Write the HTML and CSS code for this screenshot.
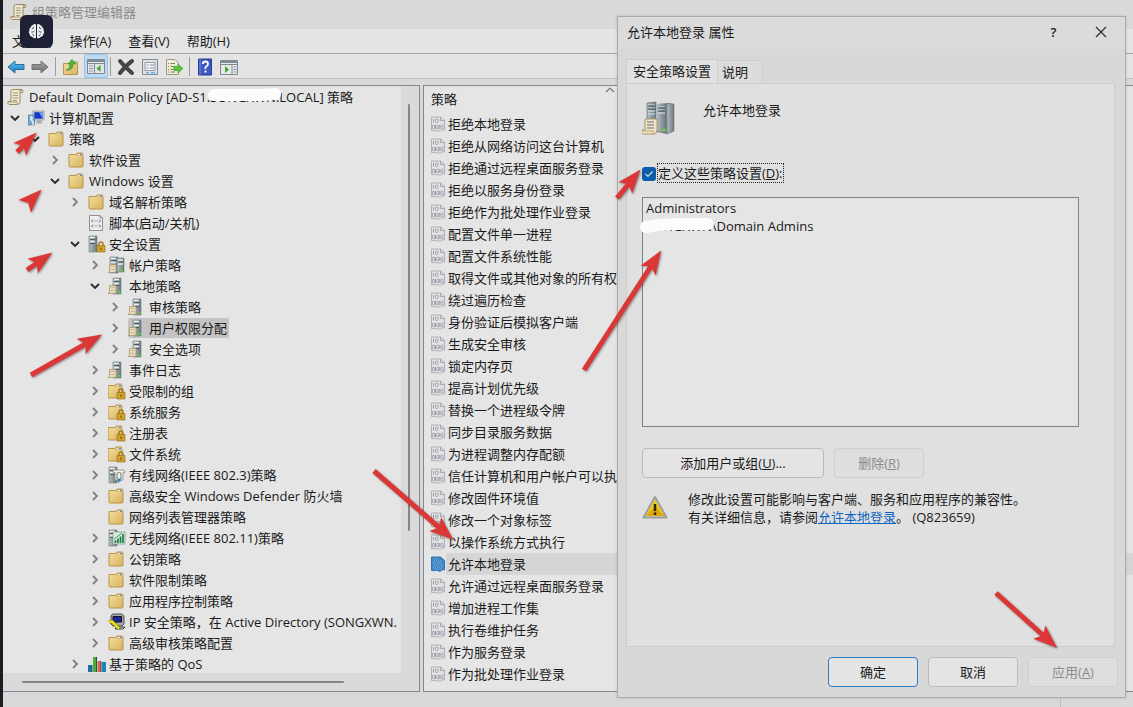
FILE: index.html
```html
<!DOCTYPE html>
<html lang="zh-CN">
<head>
<meta charset="utf-8">
<title>组策略管理编辑器</title>
<link rel="stylesheet" href="styles.css">
</head>
<body>
<svg class="sprite" aria-hidden="true">
  <defs>
    <linearGradient id="gold" x1="0" y1="0" x2="1" y2="1"><stop offset="0" stop-color="#f3dfa0"/><stop offset="1" stop-color="#d8b35c"/></linearGradient>
    <linearGradient id="steel" x1="0" y1="0" x2="1" y2="0"><stop offset="0" stop-color="#b4bfc4"/><stop offset="1" stop-color="#6c787d"/></linearGradient>
    <linearGradient id="sky" x1="0" y1="0" x2="0" y2="1"><stop offset="0" stop-color="#6cc4f0"/><stop offset="1" stop-color="#1678b8"/></linearGradient>
    <linearGradient id="ash" x1="0" y1="0" x2="0" y2="1"><stop offset="0" stop-color="#a8a8a8"/><stop offset="1" stop-color="#6c6c6c"/></linearGradient>
    <marker id="head" markerUnits="userSpaceOnUse" markerWidth="30" markerHeight="20" refX="10" refY="10" orient="auto"><path d="M25 10L1 1l5 9-5 9z" fill="#dc3737"/></marker>
  </defs>
  <symbol id="open" viewBox="0 0 20 20"><path d="M6 8l4 4 4-4" fill="none" stroke="#2c2c2c" stroke-width="1.900"/></symbol>
  <symbol id="shut" viewBox="0 0 20 20"><path d="M8 6l4 4-4 4" fill="none" stroke="#808080" stroke-width="1.800"/></symbol>
  <symbol id="folder" viewBox="0 0 18 18"><path d="M1 3.500V15q0 1 1 1h12q1 0 1-1V3.500L14.500 2H9L8 3.500z" fill="url(#gold)" stroke="#b8944c"/><path d="M9 4.500l1-1.500h5l.5 1.500z" fill="#f4f4ee" stroke="#c2a362" stroke-width=".5"/><path d="M12 3.500h2" stroke="#3a86c8"/></symbol>
  <symbol id="padlock" viewBox="0 0 18 18"><path d="M11 11V9q0-2 2-2t2 2v2" fill="none" stroke="#a47a20" stroke-width="1.500"/><path d="M9 10.500h8V17H9z" fill="#d2a02c" stroke="#91691a" stroke-width=".6"/><path d="M13 12.500v2.500" stroke="#6b4b0b"/></symbol>
  <symbol id="lockfolder" viewBox="0 0 18 18"><use href="#folder" x="-1" width="18" height="18"/><use href="#padlock" width="18" height="18"/></symbol>
  <symbol id="tower" viewBox="0 0 18 18"><path d="M5 1h8v16H5z" fill="url(#steel)" stroke="#6d787d" stroke-width=".6"/><path d="M6 2.500h5M6 6.500h5" stroke="#e8eff2" stroke-width="1.500"/><path d="M6 4.500h5M6 8.500h5" stroke="#46545b" stroke-width=".9"/></symbol>
  <symbol id="scrollet" viewBox="0 0 18 18"><path d="M1.500 8.500H8V15q0 1.500-2 1.500H0q1.500-.5 1.500-2z" fill="#e8dcb8" stroke="#a18e61" stroke-width=".7"/><path d="M3 10.500h3.500M3 13.500h3.500" stroke="#b3a47e" stroke-width=".7"/></symbol>
  <symbol id="seclock" viewBox="0 0 18 18"><use href="#tower" x="-4" width="18" height="18"/><use href="#padlock" width="18" height="18"/></symbol>
  <symbol id="server" viewBox="0 0 18 18"><use href="#tower" width="18" height="18"/><use href="#scrollet" width="18" height="18"/><path d="M10.500 15h2" stroke="#4fdc20" stroke-width="2"/></symbol>
  <symbol id="servers" viewBox="0 0 18 18"><use href="#tower" x="-3" width="18" height="18"/><path d="M9 2h7v14H9z" fill="url(#steel)" stroke="#6d787d" stroke-width=".6"/><path d="M10 4h5M10 8h5" stroke="#e8eff2" stroke-width="1.500"/><path d="M10 6h5" stroke="#46545b"/><use href="#scrollet" width="18" height="18"/><path d="M13 14.500h2" stroke="#4fdc20" stroke-width="2"/></symbol>
  <symbol id="wired" viewBox="0 0 18 18"><use href="#tower" x="-4" width="18" height="18"/><path d="M5 4h10q2 0 2 2.500h-2V14H7V6.500H5z" fill="#f2f0e6" stroke="#8d8a7a" stroke-width=".8"/><path d="M9 13V8q0-1.500 2-1.500T13 8v5" fill="none" stroke="#7b8c98" stroke-width="1.200"/><path d="M10.500 12.500v4M12 12.500v3" stroke="#2e83c6" stroke-width="1.500"/></symbol>
  <symbol id="wireless" viewBox="0 0 18 18"><use href="#tower" x="-4" width="18" height="18"/><path d="M5 3h12v12H5z" fill="#dcebe0" stroke="#84938a" stroke-width=".7"/><path d="M7.500 14v-3M10 14V9.500M12.500 14V7.500M15 14V5" stroke="#168044" stroke-width="1.700"/><path d="M6 10l8-6" stroke="#3c9c65"/></symbol>
  <symbol id="scroll" viewBox="0 0 18 18"><path d="M4 3q0-1.500 1.500-1.500H15q1.500.5.500 3H13v9q0 3-2.500 3H2q-1.500-.5-1-3h3z" fill="#f0e8cf" stroke="#988b69"/><path d="M6 5h5M6 7.500h5M6 10h5M6 12.500h4" stroke="#a59a7c"/><path d="M2 14h8q0 2 1 2" fill="none" stroke="#a39673"/><path d="M13 4.500v-2l2.500 0" fill="none" stroke="#a39673"/></symbol>
  <symbol id="computer" viewBox="0 0 18 18"><path d="M5 2h11v9H5z" fill="#d7dadd" stroke="#888f98" stroke-width=".8"/><path d="M6.300 3.200h8.500v6.500H6.300z" fill="#1736c4"/><path d="M11 3.200h3.800v6.500z" fill="#75a3f5"/><path d="M9 11h4l1.500 3.500H8z" fill="#a8adb1"/><path d="M0 6h5l1.500 3v7H0z" fill="#78a8c9" stroke="#4a7698" stroke-width=".7"/><path d="M2 8q2-1 2 1t-1 1 2 3v3" fill="none" stroke="#d9f1fb" stroke-width="1.500"/></symbol>
  <symbol id="script" viewBox="0 0 18 18"><path d="M1.500 1.500H12L14.500 4v12.500h-13z" fill="#eee" stroke="#909090"/><path d="M12 1.500V4h2.500" fill="none" stroke="#909090"/><path d="M5 5.500L3.500 7 5 8.500M11 5.500L12.500 7 11 8.500M6.500 7h1M8.500 7h1M5 10.500L3.500 12 5 13.500M11 10.500l1.500 1.500-1.500 1.500M6.500 12h1M8.500 12h1" fill="none" stroke="#555" stroke-width=".9"/></symbol>
  <symbol id="ipsec" viewBox="0 0 18 18"><path d="M3 2.500L5 1h9l2 2v8l-2 2H5l-2-2z" fill="#aaa" stroke="#333" stroke-width=".8"/><path d="M5 3.500h8.500v5.500H5z" fill="#1826a0" stroke="#111"/><path d="M7 16h8l2-2H9z" fill="#ccc" stroke="#222" stroke-width=".8"/><path d="M1 9q3-1.500 4.500 1L11 15.500" fill="none" stroke="#7c7500" stroke-width="3.400"/><path d="M1 9q3-1.500 4.500 1L11 15.500" fill="none" stroke="#efe51d" stroke-width="2.400"/></symbol>
  <symbol id="qos" viewBox="0 0 18 18"><path d="M0 10h4v7H0z" fill="#1e6fa8"/><path d="M5 2h4v15H5z" fill="#4cab3a"/><path d="M9.500 6H13v11H9.500z" fill="#d96b42"/><path d="M14 7h4v10h-4z" fill="#2381bc"/><path d="M4 10v7M8.500 2v15M13 6v11" stroke="#174056" stroke-width=".8"/></symbol>
  <symbol id="policy" viewBox="0 0 14 16"><path d="M.5 1h9l4 3.500V14q-1.500-1-3 .5t-3 .5-3-.5-4 0z" fill="#e3e3e6" stroke="#aaaaaf" stroke-width=".9"/><path d="M9.500 1v3.500h4" fill="none" stroke="#a2a2a8" stroke-width=".9"/><path d="M2.500 3v3.500M4.500 9v4M8.800 9v4" stroke="#92929f" stroke-width=".9"/><rect x="4.500" y="3" width="2.500" height="3.500" rx="1" fill="none" stroke="#92929f" stroke-width=".8"/><rect x="1.500" y="9" width="2" height="4" rx="1" fill="none" stroke="#92929f" stroke-width=".7"/><rect x="6" y="9" width="1.800" height="4" rx=".9" fill="none" stroke="#92929f" stroke-width=".7"/><rect x="10" y="9" width="2" height="4" rx="1" fill="none" stroke="#92929f" stroke-width=".7"/></symbol>
</svg>

<div class="window">
  <header class="titlebar"><svg class="ic"><use href="#scroll"/></svg><span>组策略管理编辑器</span></header>
  <nav class="menubar">
    <button>文件(F)</button><button>操作(A)</button><button>查看(V)</button><button>帮助(H)</button>
  </nav>
  <div class="toolbar">
    <button aria-label="后退"><svg class="ic" viewBox="0 0 18 18"><path d="M1 9l7-6v3.500h9v5H8V15z" fill="url(#sky)" stroke="#2272a5"/></svg></button>
    <button aria-label="前进"><svg class="ic" viewBox="0 0 18 18"><path d="M17 9l-7-6v3.500H1v5h9V15z" fill="url(#ash)" stroke="#737373"/></svg></button>
    <span class="sep"></span>
    <button aria-label="上一级"><svg class="ic" viewBox="0 0 18 18"><path d="M1.500 5.500V16.500h14V4h-5L9 5.500z" fill="url(#gold)" stroke="#b8944c"/><path d="M4 12q4 0 4-6H6L10 1.500l4 4.500H11q0 7-7 6z" fill="#4eb53a" stroke="#2f8524" stroke-width=".6"/></svg></button>
    <button class="on" aria-label="显示控制台树"><svg class="ic" viewBox="0 0 18 18"><path d="M.5 2.500h17v14H.5z" fill="#e4e4e4" stroke="#818890"/><path d="M1 4h16" stroke="#7f8b97" stroke-width="2"/><path d="M1 6.500h16M7.500 6.500v10" stroke="#818890"/><path d="M2 9h4M2 11.500h4M2 14h4" stroke="#8ba3b7"/><path d="M13.500 8v7l-4-3.500z" fill="#42a531"/></svg></button>
    <span class="sep"></span>
    <button aria-label="删除"><svg class="ic" viewBox="0 0 18 18"><path d="M3 3q4 5 12 12M15 3Q8 8 3 15" fill="none" stroke="#444" stroke-width="4" stroke-linecap="round"/></svg></button>
    <button aria-label="属性"><svg class="ic" viewBox="0 0 18 18"><path d="M1.500 1.500h15v15h-15z" fill="#dde2e6" stroke="#828a91"/><path d="M4 4.500h10v8H4z" fill="#f4f4f4" stroke="#929da6"/><path d="M5.500 7h2M9 7h4M5.500 10h2M9 10h4" stroke="#728aa0"/><path d="M5 14.700h3M10 14.700h4" stroke="#6cb4df" stroke-width="1.500"/></svg></button>
    <button aria-label="导出列表"><svg class="ic" viewBox="0 0 18 18"><path d="M1.500 1.500H10L13.500 5v11.500h-12z" fill="#f0ebd5" stroke="#a09a7e"/><path d="M3 5.500h1M5.500 5.500H10M3 8.500h1M5.500 8.500H9M3 11.500h1M5.500 11.500H9M3 14h1M5.500 14H10" stroke="#7f846b"/><path d="M9 8.500h4V6l5 4.500-5 4.500v-2.500H9z" fill="#5bc63c" stroke="#339225" stroke-width=".6"/></svg></button>
    <span class="sep"></span>
    <button aria-label="帮助"><svg class="ic" viewBox="0 0 18 18"><path d="M2.500 1h13v16h-13z" fill="#3b58c1" stroke="#253b91"/><path d="M4 1v16" stroke="#7490df"/><path d="M6.800 6q.2-2.500 2.700-2.500T12 6q0 1.500-1.500 2.300T9.400 11" fill="none" stroke="#fff" stroke-width="1.800"/><path d="M8.500 12.500h2v2h-2z" fill="#fff"/></svg></button>
    <button aria-label="显示操作窗格"><svg class="ic" viewBox="0 0 18 18"><path d="M.5 2.500h17v14H.5z" fill="#e8e8e8" stroke="#818890"/><path d="M1 4h16" stroke="#7f8b97" stroke-width="2"/><path d="M1 6.500h16M12 6.500v10" stroke="#818890"/><path d="M13.500 9h3M13.500 11.500h3M13.500 14h3" stroke="#6b9cc2"/><path d="M5 8v7l4-3.500z" fill="#42a531"/></svg></button>
  </div>

  <main class="panes">
    <section class="treepane">
      <ul class="tree" role="tree">
        <li class="root"><svg class="ic"><use href="#scroll"/></svg><span>Default Domain Policy [AD-S1.SONGXWN.LOCAL] 策略</span></li>
        <li class="d1"><svg class="tw"><use href="#open"/></svg><svg class="ic"><use href="#computer"/></svg><span>计算机配置</span></li>
        <li class="d2"><svg class="tw"><use href="#open"/></svg><svg class="ic"><use href="#folder"/></svg><span>策略</span></li>
        <li class="d3"><svg class="tw"><use href="#shut"/></svg><svg class="ic"><use href="#folder"/></svg><span>软件设置</span></li>
        <li class="d3"><svg class="tw"><use href="#open"/></svg><svg class="ic"><use href="#folder"/></svg><span>Windows 设置</span></li>
        <li class="d4"><svg class="tw"><use href="#shut"/></svg><svg class="ic"><use href="#folder"/></svg><span>域名解析策略</span></li>
        <li class="d4"><i class="tw"></i><svg class="ic"><use href="#script"/></svg><span>脚本(启动/关机)</span></li>
        <li class="d4"><svg class="tw"><use href="#open"/></svg><svg class="ic"><use href="#seclock"/></svg><span>安全设置</span></li>
        <li class="d5"><svg class="tw"><use href="#shut"/></svg><svg class="ic"><use href="#servers"/></svg><span>帐户策略</span></li>
        <li class="d5"><svg class="tw"><use href="#open"/></svg><svg class="ic"><use href="#server"/></svg><span>本地策略</span></li>
        <li class="d6"><svg class="tw"><use href="#shut"/></svg><svg class="ic"><use href="#server"/></svg><span>审核策略</span></li>
        <li class="d6"><svg class="tw"><use href="#shut"/></svg><div class="picked"><svg class="ic"><use href="#server"/></svg><span>用户权限分配</span></div></li>
        <li class="d6"><svg class="tw"><use href="#shut"/></svg><svg class="ic"><use href="#server"/></svg><span>安全选项</span></li>
        <li class="d5"><svg class="tw"><use href="#shut"/></svg><svg class="ic"><use href="#server"/></svg><span>事件日志</span></li>
        <li class="d5"><svg class="tw"><use href="#shut"/></svg><svg class="ic"><use href="#lockfolder"/></svg><span>受限制的组</span></li>
        <li class="d5"><svg class="tw"><use href="#shut"/></svg><svg class="ic"><use href="#lockfolder"/></svg><span>系统服务</span></li>
        <li class="d5"><svg class="tw"><use href="#shut"/></svg><svg class="ic"><use href="#lockfolder"/></svg><span>注册表</span></li>
        <li class="d5"><svg class="tw"><use href="#shut"/></svg><svg class="ic"><use href="#lockfolder"/></svg><span>文件系统</span></li>
        <li class="d5"><svg class="tw"><use href="#shut"/></svg><svg class="ic"><use href="#wired"/></svg><span>有线网络(IEEE 802.3)策略</span></li>
        <li class="d5"><svg class="tw"><use href="#shut"/></svg><svg class="ic"><use href="#folder"/></svg><span>高级安全 Windows Defender 防火墙</span></li>
        <li class="d5"><i class="tw"></i><svg class="ic"><use href="#folder"/></svg><span>网络列表管理器策略</span></li>
        <li class="d5"><svg class="tw"><use href="#shut"/></svg><svg class="ic"><use href="#wireless"/></svg><span>无线网络(IEEE 802.11)策略</span></li>
        <li class="d5"><svg class="tw"><use href="#shut"/></svg><svg class="ic"><use href="#folder"/></svg><span>公钥策略</span></li>
        <li class="d5"><svg class="tw"><use href="#shut"/></svg><svg class="ic"><use href="#folder"/></svg><span>软件限制策略</span></li>
        <li class="d5"><svg class="tw"><use href="#shut"/></svg><svg class="ic"><use href="#folder"/></svg><span>应用程序控制策略</span></li>
        <li class="d5"><svg class="tw"><use href="#shut"/></svg><svg class="ic"><use href="#ipsec"/></svg><span>IP 安全策略，在 Active Directory (SONGXWN.</span></li>
        <li class="d5"><svg class="tw"><use href="#shut"/></svg><svg class="ic"><use href="#folder"/></svg><span>高级审核策略配置</span></li>
        <li class="d4"><svg class="tw"><use href="#shut"/></svg><svg class="ic"><use href="#qos"/></svg><span>基于策略的 QoS</span></li>
      </ul>
      <div class="vbar"><div class="vthumb"></div></div>
      <div class="hbar"><div class="hthumb"></div></div>
    </section>

    <section class="listpane">
      <div class="colhead"><span>策略</span><svg class="sort" viewBox="0 0 10 6"><path d="M1 5l4-4 4 4" fill="none" stroke="#777" stroke-width="1.200"/></svg></div>
      <ul class="list">
        <li><svg><use href="#policy"/></svg><span>拒绝本地登录</span></li>
        <li><svg><use href="#policy"/></svg><span>拒绝从网络访问这台计算机</span></li>
        <li><svg><use href="#policy"/></svg><span>拒绝通过远程桌面服务登录</span></li>
        <li><svg><use href="#policy"/></svg><span>拒绝以服务身份登录</span></li>
        <li><svg><use href="#policy"/></svg><span>拒绝作为批处理作业登录</span></li>
        <li><svg><use href="#policy"/></svg><span>配置文件单一进程</span></li>
        <li><svg><use href="#policy"/></svg><span>配置文件系统性能</span></li>
        <li><svg><use href="#policy"/></svg><span>取得文件或其他对象的所有权</span></li>
        <li><svg><use href="#policy"/></svg><span>绕过遍历检查</span></li>
        <li><svg><use href="#policy"/></svg><span>身份验证后模拟客户端</span></li>
        <li><svg><use href="#policy"/></svg><span>生成安全审核</span></li>
        <li><svg><use href="#policy"/></svg><span>锁定内存页</span></li>
        <li><svg><use href="#policy"/></svg><span>提高计划优先级</span></li>
        <li><svg><use href="#policy"/></svg><span>替换一个进程级令牌</span></li>
        <li><svg><use href="#policy"/></svg><span>同步目录服务数据</span></li>
        <li><svg><use href="#policy"/></svg><span>为进程调整内存配额</span></li>
        <li><svg><use href="#policy"/></svg><span>信任计算机和用户帐户可以执行委派</span></li>
        <li><svg><use href="#policy"/></svg><span>修改固件环境值</span></li>
        <li><svg><use href="#policy"/></svg><span>修改一个对象标签</span></li>
        <li><svg><use href="#policy"/></svg><span>以操作系统方式执行</span></li>
        <li class="sel"><svg viewBox="0 0 14 16"><path d="M.5 1h9l4 3.500V14q-1.500-1-3 .5t-3 .5-3-.5-4 0z" fill="#3f86c4" stroke="#2f75b5"/><path d="M2 3h6M3 5h8M2 7h10M3 9h10M2 11h10M3 13h8" stroke="#86b4dc" stroke-dasharray="1 1"/></svg><span>允许本地登录</span></li>
        <li><svg><use href="#policy"/></svg><span>允许通过远程桌面服务登录</span></li>
        <li><svg><use href="#policy"/></svg><span>增加进程工作集</span></li>
        <li><svg><use href="#policy"/></svg><span>执行卷维护任务</span></li>
        <li><svg><use href="#policy"/></svg><span>作为服务登录</span></li>
        <li><svg><use href="#policy"/></svg><span>作为批处理作业登录</span></li>
      </ul>
    </section>
  </main>
  <footer class="status"><span class="cell"></span></footer>
</div>

<div class="dialog" role="dialog" aria-labelledby="dlg-title">
  <header class="dlg-title"><h1 id="dlg-title">允许本地登录 属性</h1><button class="help" aria-label="帮助">?</button><button class="close" aria-label="关闭"><svg viewBox="0 0 12 12"><path d="M1 1l10 10M11 1L1 11" stroke="#333" stroke-width="1.300"/></svg></button></header>
  <div class="tabs" role="tablist"><button class="tab active" role="tab">安全策略设置</button><button class="tab" role="tab">说明</button></div>
  <div class="sheet">
    <div class="subject">
      <svg viewBox="0 0 34 34"><path d="M5 2l9-1v23H5z" fill="url(#steel)" stroke="#626e75" stroke-width=".7"/><path d="M6 4h7M6 7h7M6 10h7M6 13h7" stroke="#d9e3e7"/><path d="M6 5h7M6 8h7" stroke="#3b4a51"/><path d="M15 3L26 2l6 1v27l-7 3-10-2z" fill="#737f84"/><path d="M15 3h9v29l-9-2z" fill="url(#steel)"/><path d="M25 3h7v27l-7 3z" fill="url(#steel)" stroke="#65716f" stroke-width=".5"/><path d="M16 6h7M16 9h7M16 12h7" stroke="#d9e3e7"/><path d="M16 7h7M16 10h7" stroke="#34434a"/><path d="M21 29h3" stroke="#62df22" stroke-width="2.500"/><path d="M3 18h12v11q0 4-3 4H1q-2-1-1-4h3z" fill="#efe5c4" stroke="#a79467"/><path d="M5 21h7M5 24h7M5 27h7" stroke="#6e6d83"/><path d="M1 30h10q0 3 2 3" fill="none" stroke="#b6a26d"/></svg>
      <span>允许本地登录</span>
    </div>
    <div class="define"><input type="checkbox" id="define" checked><label for="define">定义这些策略设置(<u>D</u>):</label></div>
    <ul class="members" role="listbox" aria-label="用户和组"><li role="option">Administrators</li><li role="option">SONGXWN\Domain Admins</li></ul>
    <div class="edit"><button class="btn wide">添加用户或组(<u>U</u>)...</button><button class="btn" disabled>删除(<u>R</u>)</button></div>
    <div class="warn">
      <svg viewBox="0 0 26 24"><path d="M13 2L24.500 22.500h-23z" fill="#ddd" stroke="#9b9b9b" stroke-width="2" stroke-linejoin="round"/><path d="M13 4.500L22.500 21h-19z" fill="#edc515"/><path d="M13 12L22.500 21h-19z" fill="#dba60f"/><path d="M13 9v7M13 17.500v2.500" stroke="#2d2607" stroke-width="2.400"/></svg>
      <p>修改此设置可能影响与客户端、服务和应用程序的兼容性。<br>有关详细信息，请参阅<a href="#">允许本地登录</a>。 (Q823659)</p>
    </div>
  </div>
  <footer class="actions"><button class="btn default">确定</button><button class="btn">取消</button><button class="btn" disabled>应用(<u>A</u>)</button></footer>
</div>

<div class="badge"><svg viewBox="0 0 16 16"><path d="M7.500 1.500Q6 .4 4.700 1.800 2.800 2 2.700 4 .8 5 1.300 7 0 8.800 1.500 10.300q0 2.400 2.300 2.700 1.200 2 3.700 1zM8.500 1.500Q10 .4 11.300 1.800q1.900.2 2 2.200 1.900 1 1.400 3 1.300 1.800-.2 3.300 0 2.400-2.300 2.700-1.200 2-3.700 1z" fill="#f2f2f2"/><path d="M5.500 3.500q0 2-2 2M6 7.500q-1 1.500-3 1M5.500 12.500q0-1.500-1.500-2M10.500 3.500q0 2 2 2M10 7.500q1 1.500 3 1M10.500 12.500q0-1.500 1.500-2" fill="none" stroke="#1e2036" stroke-width=".7"/></svg></div>

<svg class="marks" aria-hidden="true">
  <g fill="none" stroke="#fcfcfc" stroke-linecap="round" stroke-linejoin="round">
    <path d="M214 95l20 0 26 0 15-1" stroke-width="12"/>
    <path d="M646 227l12-2 20-1 30 0" stroke-width="12"/>
  </g>
  <g class="arrows">
    <path d="M17 152L26 143"/><path d="M30 201L31 200"/><path d="M27 270L40 261"/><path d="M31 375L89 342"/><path d="M374 471L442 530"/><path d="M617 198L631 181"/><path d="M584 370L653 263"/><path d="M996 593L1046 638"/>
  </g>
</svg>
</body>
</html>
```
FILE: styles.css
```css
* { box-sizing: border-box; }
body {
  margin: 0;
  height: 100vh;
  position: relative;
  overflow: hidden;
  background: #1c1d22;
  color: #1a1a1a;
  font: 13px/18px "Open Sans", "Noto Sans CJK SC", sans-serif;
}
button { font: inherit; color: inherit; margin: 0; padding: 0; border: 0; background: none; }
ul { list-style: none; margin: 0; padding: 0; }
.sprite { position: absolute; width: 0; height: 0; }
.ic { width: 18px; height: 18px; flex: none; display: block; }

.window { height: 100%; margin-left: 3px; display: flex; flex-direction: column; background: #d9d9d9; }
.titlebar { flex: none; height: 29px; padding: 0 0 5px 7px; display: flex; align-items: center; gap: 4px; color: #8c8c8c; background: #dadada; }
.menubar { flex: none; height: 25px; display: flex; align-items: center; gap: 17px; padding-left: 9px; background: #e4e4e4; border-bottom: 1px solid #a8a8a8; }
.toolbar { flex: none; height: 25px; display: flex; align-items: center; gap: 6px; padding-left: 4px; background: #e4e4e4; border-bottom: 1px solid #c0c0c0; }
.toolbar button { padding: 2px 0 1px; }
.toolbar button.on { padding: 2px; border: 1px solid #98c3e8; border-radius: 2px; background: #bddaf1; margin: 0 -4px 0 -2px; }
.sep { width: 1px; height: 19px; background: #9c9c9c; }

.panes { flex: 1; min-height: 0; margin-top: 6px; display: grid; grid-template-columns: 417px 1fr; gap: 3px; }
.treepane { border: 1px solid #828790; border-left: 0; display: grid; grid-template: minmax(0, 1fr) 18px / minmax(0, 1fr) 18px; min-height: 0; background: #dadada; }
.tree { overflow: hidden; background: #e5e5e5; }
.tree li { height: 21px; display: flex; align-items: center; gap: 3px; white-space: nowrap; }
.tw { width: 20px; height: 20px; flex: none; }
.tree .root { padding-left: 4px; gap: 4px; }
.d1 { padding-left: 2px; }
.d2 { padding-left: 22px; }
.d3 { padding-left: 42px; }
.d4 { padding-left: 62px; }
.d5 { padding-left: 82px; }
.d6 { padding-left: 102px; }
.picked { display: flex; align-items: center; gap: 3px; height: 20px; padding-right: 2px; background: #c4c4c4; border-radius: 2px; }
.vbar { padding-top: 18px; }
.vthumb { width: 2px; height: 75%; margin-left: 7px; background: #868686; border-radius: 1px; }
.hbar { padding: 8px 0 0 19px; }
.hthumb { width: 85%; height: 2px; background: #868686; border-radius: 1px; }

.listpane { border: 1px solid #828790; border-right: 0; background: #e5e5e5; overflow: hidden; min-width: 0; }
.colhead { position: relative; width: 372px; height: 27px; padding: 4px 0 0 7px; }
.sort { position: absolute; top: 1px; left: 50%; width: 10px; height: 6px; margin-left: -5px; }
.list li { height: 22px; display: flex; align-items: center; gap: 1px; padding-left: 7px; white-space: nowrap; }
.list svg { width: 14px; height: 16px; flex: none; }
.list span { flex: 1; line-height: 22px; padding-left: 2px; }
.sel span { background: #d6d6d6; }

.status { flex: none; height: 15px; display: flex; justify-content: flex-end; }
.cell { width: 73px; border-left: 1px solid #bdbdbd; }

.dialog { position: absolute; left: 617px; right: 7px; top: 16px; bottom: 9px; display: flex; flex-direction: column; background: #d8d8d8; border: 1px solid #ababab; box-shadow: 0 0 3px #0002; }
.dlg-title { flex: none; height: 32px; display: flex; align-items: center; padding: 0 0 2px 9px; background: #dbdbdb; }
.dlg-title h1 { flex: 1; margin: 0; font-size: 13px; font-weight: 400; }
.help { width: 47px; font-weight: 600; }
.close { width: 48px; height: 30px; display: grid; place-items: center; }
.close svg { width: 12px; height: 12px; }
.tabs { display: flex; align-items: flex-end; padding: 10px 0 0 8px; }
.tab { height: 23px; padding: 0 14px 0 4px; background: #dcdcdc; border: 1px solid #cdcdcd; border-bottom: 0; border-left: 0; }
.tab.active { height: 25px; padding: 0 6px 3px; margin-bottom: -1px; background: #e1e1e1; border-left: 1px solid #cdcdcd; }
.sheet { flex: 1; margin: 0 10px 0 8px; padding: 17px 35px 0 15px; background: #e0e0e0; border: 1px solid #cdcdcd; min-height: 0; }
.subject { display: flex; gap: 27px; height: 62px; }
.subject svg { width: 34px; height: 34px; }
.define { display: flex; align-items: center; gap: 2px; height: 20px; margin-bottom: 14px; }
.define label { line-height: 18px; outline: 1px dotted #222; }
.define input { appearance: none; width: 14px; height: 14px; margin: 2px 0 0; border-radius: 3px; background: #0b5cab url("data:image/svg+xml,%3Csvg xmlns='http://www.w3.org/2000/svg' viewBox='0 0 14 14'%3E%3Cpath d='M3.500 7l2.500 2.500 4.500-5' fill='none' stroke='%23ddd' stroke-width='1.200'/%3E%3C/svg%3E"); }
.members { height: 230px; border: 1px solid #7d838c; background: #e5e5e5; padding: 1px 3px; }
.members li { height: 18px; }
.edit { display: flex; gap: 10px; margin-top: 21px; }
.btn { width: 90px; height: 30px; background: #e4e4e4; border: 1px solid #bbb; border-radius: 4px; }
.btn.wide { width: 182px; }
.btn:disabled { color: #8b8b8b; background: #dedede; border-color: #cfcfcf; }
.btn.default { border-color: #2f7fc4; }
.warn { display: flex; gap: 20px; margin-top: 12px; }
.warn svg { width: 26px; height: 24px; margin-top: 5px; flex: none; }
.warn p { margin: 0; }
.warn a { color: #0f66c0; }
.actions { flex: none; display: flex; justify-content: flex-end; gap: 10px; padding: 10px 7px 10px 0; }

.badge { position: absolute; left: 20px; top: 15px; width: 33px; height: 33px; display: grid; place-items: center; border-radius: 6px; background: #1e2036; }
.badge svg { width: 17px; height: 17px; }
.marks { position: absolute; inset: 0; width: 100%; height: 100%; pointer-events: none; }
.arrows { fill: none; stroke: #dc3737; stroke-width: 5; filter: drop-shadow(1px 1px 1px #0006); }
.arrows path { marker-end: url(#head); }
```
